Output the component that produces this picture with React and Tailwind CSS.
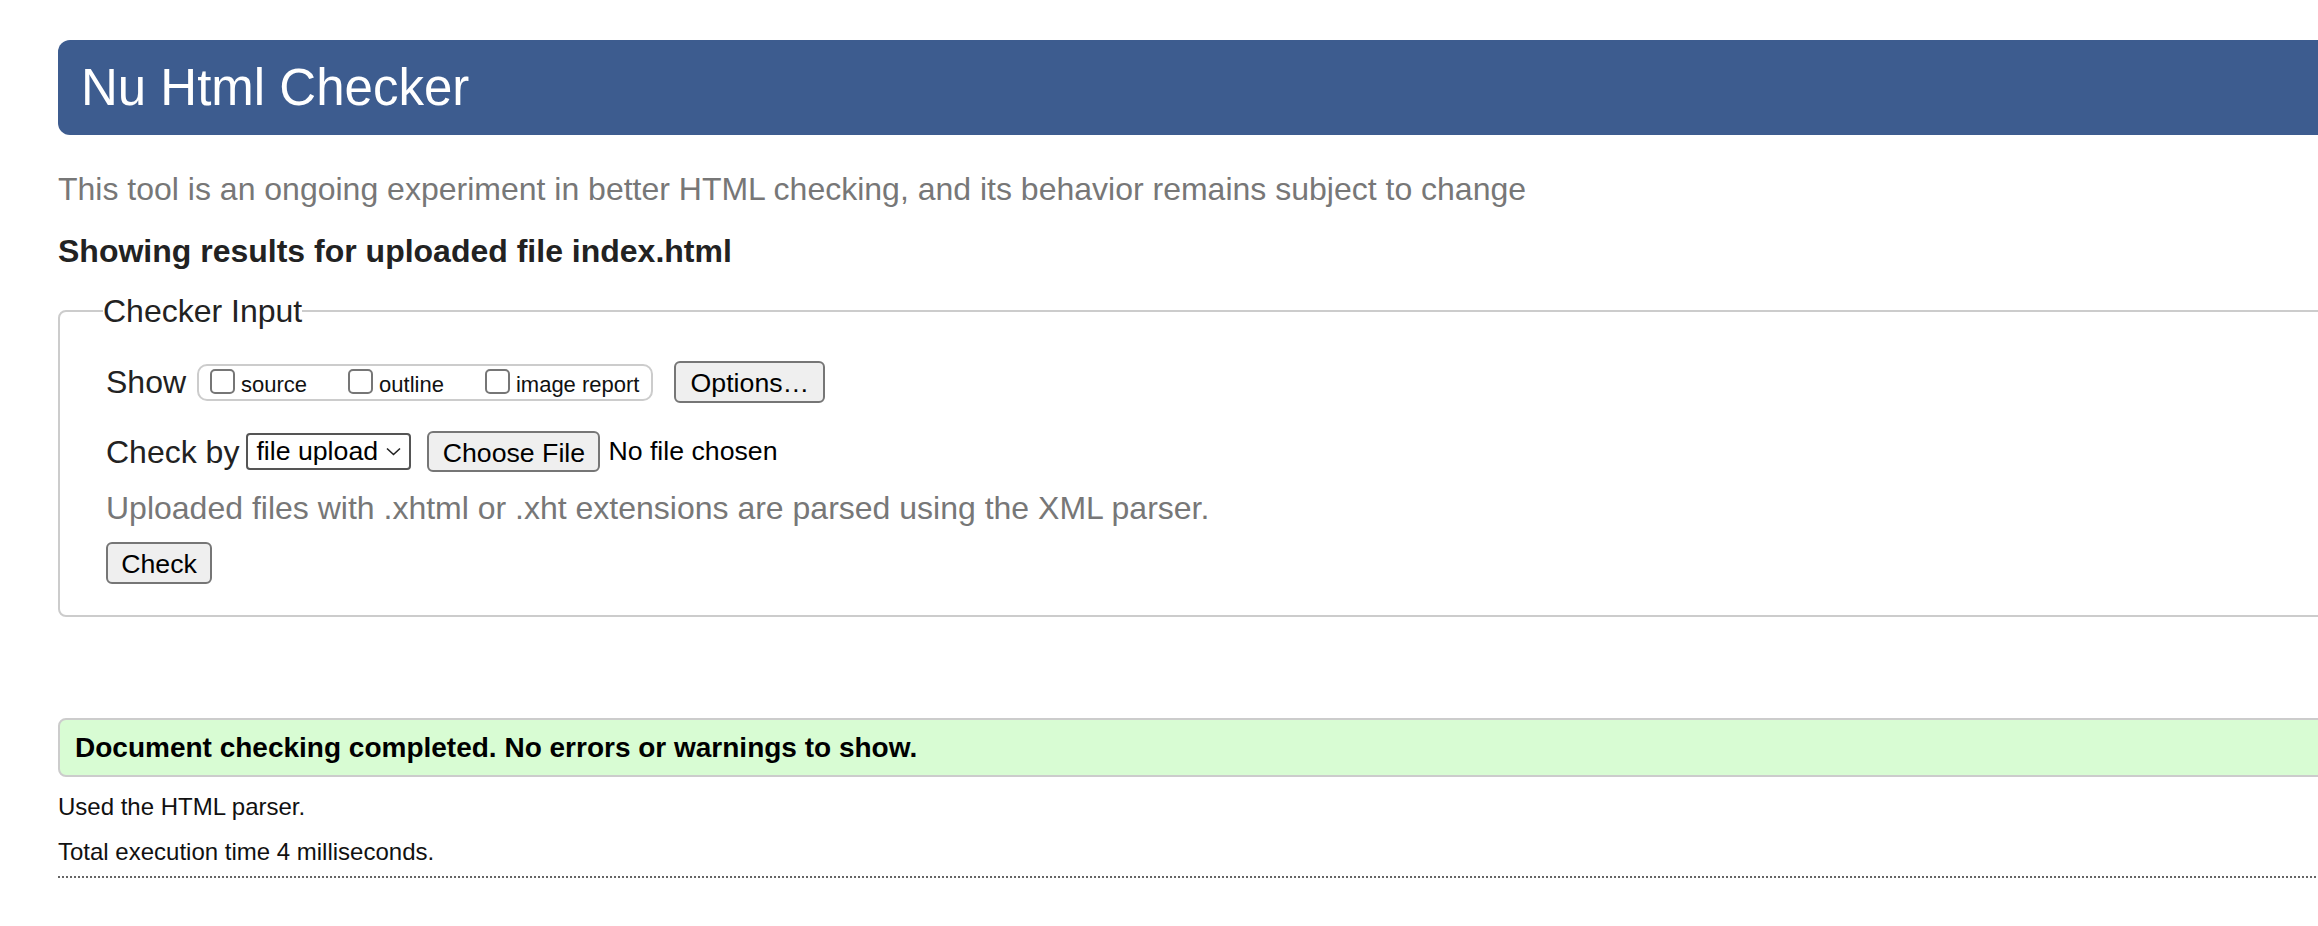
import React from "react";

// ── options shown in the "Show" group ──
const showOptions = [
  { id: "source", label: "source" },
  { id: "outline", label: "outline" },
  { id: "image", label: "image report" },
];

export default function App() {
  return (
    <div className="w-full min-h-screen overflow-hidden bg-white font-['Liberation_Sans',Arial,sans-serif] text-[#222]">
      <div className="w-[2400px] pl-[58px] pt-[40px]">
        {/* ── HEADER ── */}
        <header className="h-[95px] bg-[#3d5c8f] rounded-l-[12px] flex items-center pl-[23px]">
          <h1 className="text-white text-[51px] leading-none font-normal">
            Nu Html Checker
          </h1>
        </header>

        {/* ── INTRO ── */}
        <p className="mt-[35px] text-[32px] leading-[38px] text-[#777]">
          This tool is an ongoing experiment in better HTML checking, and its
          behavior remains subject to change
        </p>
        <h2 className="mt-[24px] text-[32px] leading-[38px] font-bold">
          Showing results for uploaded file index.html
        </h2>

        {/* ── CHECKER INPUT ── */}
        <fieldset className="mt-[22px] border-2 border-[#ccc] rounded-[8px] pl-[46px] pb-[31px]">
          <legend className="ml-[-3px] text-[32px] leading-[38px]">
            Checker Input
          </legend>

          <div className="mt-[31px] h-[42px] flex items-center">
            <span className="text-[32px] leading-none">Show</span>
            <div className="ml-[11px] h-[37px] flex items-center border-2 border-[#ccc] rounded-[10px] pl-[11px] pr-[12px]">
              {showOptions.map((opt, i) => (
                <label
                  key={opt.id}
                  className={`flex items-end ${i > 0 ? "ml-[41px]" : ""}`}
                >
                  <span className="mb-[1px] w-[25px] h-[25px] border-2 border-[#767676] rounded-[5px] bg-white" />
                  <span className="ml-[6px] text-[22px] leading-[20px] text-[#111]">
                    {opt.label}
                  </span>
                </label>
              ))}
            </div>
            <button className="ml-[21px] h-[42px] w-[151px] border-2 border-[#767676] rounded-[6px] bg-[#efefef] text-[26.7px] text-black">
              Options…
            </button>
          </div>

          <div className="mt-[28px] h-[41px] flex items-center">
            <span className="text-[32px] leading-none">Check by</span>
            <div className="ml-[7px] h-[37px] w-[165px] flex items-center justify-between border-2 border-[#555] rounded-[4px] bg-white pl-[8px] pr-[8px]">
              <span className="text-[26.7px] leading-none text-black">
                file upload
              </span>
              <svg width="15" height="9" viewBox="0 0 15 9" fill="none">
                <path d="M1 1.5 L7.5 7.5 L14 1.5" stroke="#222" strokeWidth="1.6" />
              </svg>
            </div>
            <button className="ml-[16px] h-[41px] w-[173px] border-2 border-[#767676] rounded-[6px] bg-[#efefef] text-[26.7px] text-black">
              Choose File
            </button>
            <span className="ml-[8px] text-[26.7px] text-black">
              No file chosen
            </span>
          </div>

          <p className="mt-[17px] text-[32px] leading-[38px] text-[#777]">
            Uploaded files with .xhtml or .xht extensions are parsed using the
            XML parser.
          </p>

          <button className="mt-[15px] h-[42px] w-[106px] border-2 border-[#767676] rounded-[6px] bg-[#efefef] text-[26.7px] text-black">
            Check
          </button>
        </fieldset>

        {/* ── RESULT ── */}
        <div className="mt-[101px] h-[59px] flex items-center border-2 border-[#ccc] rounded-[8px] bg-[#d8fcd3] pl-[15px]">
          <p className="text-[28px] font-bold text-black">
            Document checking completed. No errors or warnings to show.
          </p>
        </div>

        <p className="mt-[15px] text-[24px] leading-[29px] text-[#111]">
          Used the HTML parser.
        </p>
        <p className="mt-[16px] text-[24px] leading-[29px] text-[#111]">
          Total execution time 4 milliseconds.
        </p>
        <div className="mt-[10px] border-t-2 border-dotted border-[#666]" />
      </div>
    </div>
  );
}
